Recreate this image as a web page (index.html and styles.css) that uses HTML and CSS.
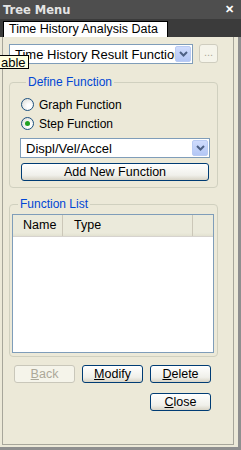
FILE: index.html
```html
<!DOCTYPE html>
<html>
<head>
    <title>Tree Menu</title>
    <link rel="stylesheet" href="styles.css">
</head>
<body>
    <div class="window">
        <!-- Title bar -->
        <div class="titlebar">
            <span class="title">Tree Menu</span>
            <span class="close-x">&#x2715;</span>
        </div>

        <!-- Tab strip -->
        <div class="tabstrip">
            <div class="tab">Time History Analysis Data</div>
        </div>

        <!-- Tab page -->
        <div class="frame">
            <div class="page">
                <div class="top-row">
                    <div class="combo combo-main">
                        <span class="combo-text">Time History Result Function</span>
                        <span class="combo-btn">
                            <svg width="9" height="6" viewBox="0 0 9 6"><path d="M1 1 L4.5 4.5 L8 1" fill="none" stroke="#4d6185" stroke-width="2"/></svg>
                        </span>
                    </div>
                    <div class="btn-dots">...</div>
                </div>

                <!-- Define Function group -->
                <fieldset class="group group-define">
                    <legend>Define Function</legend>
                    <div class="radio-row">
                        <span class="radio"></span>
                        <span>Graph Function</span>
                    </div>
                    <div class="radio-row">
                        <span class="radio checked"></span>
                        <span>Step Function</span>
                    </div>
                    <div class="combo combo-type">
                        <span class="combo-text">Displ/Vel/Accel</span>
                        <span class="combo-btn">
                            <svg width="9" height="6" viewBox="0 0 9 6"><path d="M1 1 L4.5 4.5 L8 1" fill="none" stroke="#4d6185" stroke-width="2"/></svg>
                        </span>
                    </div>
                    <div class="btn btn-add">Add New Function</div>
                </fieldset>

                <!-- Function List group -->
                <fieldset class="group group-list">
                    <legend>Function List</legend>
                    <div class="listview">
                        <div class="list-header">
                            <div class="col col-name">Name</div>
                            <div class="col col-type">Type</div>
                            <div class="col col-rest"></div>
                        </div>
                    </div>
                </fieldset>

                <!-- Buttons -->
                <div class="button-grid">
                    <div class="btn disabled"><u>B</u>ack</div>
                    <div class="btn"><u>M</u>odify</div>
                    <div class="btn"><u>D</u>elete</div>
                    <div class="btn btn-close"><u>C</u>lose</div>
                </div>
            </div>
        </div>

        <!-- Tooltip left over from a hovered control -->
        <div class="tooltip">able</div>
    </div>
</body>
</html>
```

FILE: styles.css
```css
/* Basic page */
body {
    margin: 0;
    font-family: "Liberation Sans", Arial, sans-serif;
    font-size: 12px;
    color: #000;
    background: #ece9d8;
}

/* Window */
.window {
    position: relative;
    width: 241px;
    height: 450px;
    display: flex;
    flex-direction: column;
    overflow: hidden;
}

/* Title bar */
.titlebar {
    height: 19px;
    background: #4e4e4e;
    display: flex;
    align-items: center;
    justify-content: space-between;
    padding: 0 7px 0 3px;
}

.title {
    font-family: "DejaVu Sans", sans-serif;
    font-weight: bold;
    font-size: 11.5px;
    color: #e4e4e4;
}

.close-x {
    color: #fff;
    font-weight: bold;
    font-size: 11px;
}

/* Tab strip */
.tabstrip {
    height: 18px;
    background: #3b3b3b;
    display: flex;
    align-items: flex-end;
    padding-left: 3px;
}

.tab {
    background: #fff;
    border: 1px solid #000;
    border-bottom: none;
    height: 15px;
    line-height: 15px;
    padding: 0 5px;
    width: 153px;
    font-size: 12.5px;
}

/* Frame around the tab page */
.frame {
    flex: 1;
    display: flex;
    padding: 0 4px 2px 2px;
    background: #ece9d8;
    border-right: 3px solid #8f8f8f;
    border-bottom: 3px solid #8f8f8f;
}

.page {
    flex: 1;
    border: 1px solid #a7a69a;
    border-top: none;
    padding: 7px 0 0 6px;
    display: flex;
    flex-direction: column;
}

/* First row: function combo + dots button */
.top-row {
    display: flex;
    gap: 6px;
    height: 20px;
}

/* Combo box */
.combo {
    height: 20px;
    box-sizing: border-box;
    border: 1px solid #7f9db9;
    background: #fff;
    display: flex;
    align-items: center;
    overflow: hidden;
}

.combo-main {
    width: 184px;
}

.combo-text {
    flex: 1;
    white-space: nowrap;
    overflow: hidden;
    padding-left: 5px;
    font-size: 13px;
}

.combo-btn {
    width: 16px;
    height: 16px;
    margin-right: 1px;
    border-radius: 2px;
    background: linear-gradient(#cfdcfd, #b3c7f5);
    border: 1px solid #b9cbf3;
    box-sizing: border-box;
    display: flex;
    align-items: center;
    justify-content: center;
    flex-shrink: 0;
}

.btn-dots {
    width: 19px;
    height: 19px;
    box-sizing: border-box;
    border: 1px solid #cfcdbf;
    border-radius: 3px;
    background: #f5f4ea;
    color: #aca899;
    text-align: center;
    line-height: 15px;
    font-size: 11px;
}

/* Group boxes */
.group {
    margin: 9px 0 0 0;
    width: 209px;
    box-sizing: border-box;
    border: 1px solid #d0d0bf;
    border-radius: 4px;
}

.group legend {
    color: #0046d5;
    padding: 0 2px;
    margin-left: 6px;
    line-height: 14px;
    font-size: 12px;
}

.group-define {
    margin-top: 11px;
    padding: 6px 7px 6px 10px;
}

.radio-row {
    height: 19px;
    display: flex;
    align-items: center;
    gap: 5px;
    padding-left: 1px;
    font-size: 12px;
}

/* Radio button */
.radio {
    width: 13px;
    height: 13px;
    box-sizing: border-box;
    border: 1px solid #1c5180;
    border-radius: 50%;
    background: radial-gradient(circle at 65% 65%, #fff 20%, #dcdcd7 90%);
    display: flex;
    align-items: center;
    justify-content: center;
}

.radio.checked::after {
    content: "";
    width: 5px;
    height: 5px;
    border-radius: 50%;
    background: #21a121;
}

.combo-type {
    margin-top: 5px;
    width: 190px;
}

/* XP style push button */
.btn {
    height: 18px;
    box-sizing: border-box;
    border: 1px solid #003c74;
    border-radius: 3px;
    background: linear-gradient(#ffffff, #f0f0ea 70%, #d8d4c6);
    text-align: center;
    line-height: 16px;
    font-size: 12.5px;
}

.btn-add {
    margin: 5px 0 0 1px;
    width: 188px;
}

.btn.disabled {
    border-color: #c9c7ba;
    background: #f5f4ea;
    color: #aca899;
}

/* Function list group */
.group-list {
    margin-top: 9px;
    padding: 3px 3px 3px 2px;
}

.listview {
    height: 137px;
    border: 1px solid #7f9db9;
    background: #fff;
}

.list-header {
    display: flex;
    height: 21px;
    background: linear-gradient(#ebeadb, #ebeadb 85%, #e2e1d0);
    border-bottom: 1px solid #d6d3ce;
}

.col {
    line-height: 21px;
    font-size: 12.5px;
    box-sizing: border-box;
    border-right: 1px solid #cbc7b8;
}

.col-name {
    width: 50px;
    padding-left: 10px;
}

.col-type {
    width: 130px;
    padding-left: 11px;
}

.col-rest {
    flex: 1;
    border-right: none;
}

/* Bottom buttons */
.button-grid {
    margin-top: 8px;
    padding-left: 5px;
    display: grid;
    grid-template-columns: 61px 61px 61px;
    column-gap: 7px;
    row-gap: 10px;
}

.btn-close {
    grid-column: 3;
}

/* Tooltip over the left edge */
.tooltip {
    position: absolute;
    left: -1px;
    top: 55px;
    height: 14px;
    line-height: 13px;
    padding: 0 2px 0 1px;
    background: #ffffe1;
    border: 1px solid #000;
    box-sizing: border-box;
    font-size: 13px;
}
```
